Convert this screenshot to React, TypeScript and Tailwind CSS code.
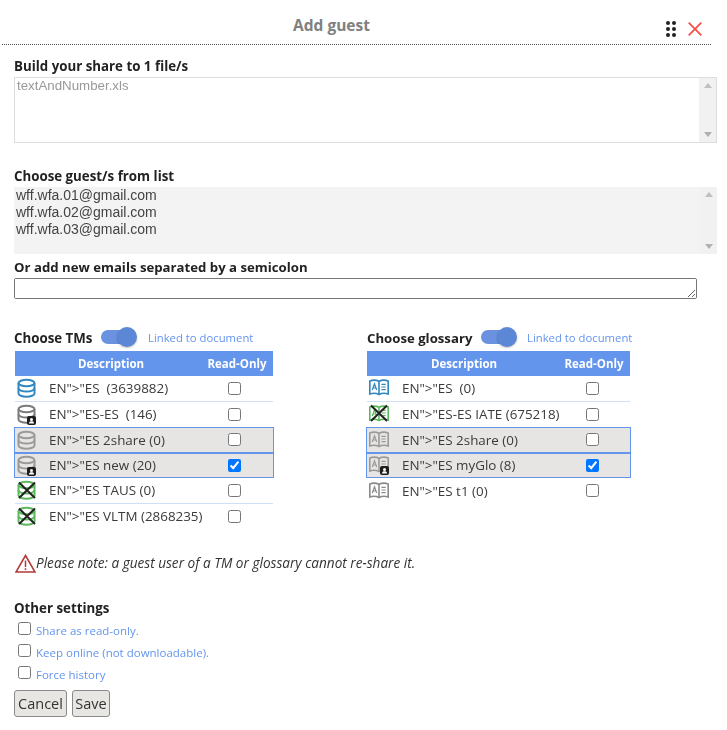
import React from "react";

const font = "font-['Open_Sans','Noto_Sans',sans-serif]";

function Badge({ x = 11, y = 12 }: { x?: number; y?: number }) {
  return (
    <g transform={`translate(${x} ${y})`}>
      <rect x="0" y="0" width="9" height="9" rx="2" fill="#1d1d1d" />
      <circle cx="4.500" cy="3.400" r="1.500" fill="#fff" />
      <path d="M2 7.500c0-1.600 1-2.200 2.500-2.200S7 5.900 7 7.500z" fill="#fff" />
    </g>
  );
}

function Cross() {
  return <path d="M3 2.500 19 18M19 2.500 3 18" stroke="#222" strokeWidth="2" fill="none" />;
}

function Db({ color, badge, cross }: { color: string; badge?: boolean; cross?: boolean }) {
  return (
    <svg width="22" height="22" viewBox="0 -1 22 22" className="block">
      <g fill="none" stroke={color} strokeWidth="2">
        <ellipse cx="10.500" cy="5" rx="8" ry="3.200" />
        <path d="M2.500 5v10.500c0 1.800 3.600 3.200 8 3.200s8-1.400 8-3.200V5" />
        <path d="M2.500 10.300c0 1.800 3.600 3.200 8 3.200s8-1.400 8-3.200" />
      </g>
      {cross && <Cross />}
      {badge && <Badge />}
    </svg>
  );
}

function Book({ color, badge, cross }: { color: string; badge?: boolean; cross?: boolean }) {
  return (
    <svg width="22" height="22" viewBox="0 0 22 22" className="block">
      <g fill="none" stroke={color} strokeWidth="1.600">
        <path d="M1.800 4c3-1.200 6.200-1.200 9.200.3 3-1.500 6.200-1.500 9.200-.3v13c-3-1-6.200-1-9.200.5-3-1.500-6.200-1.500-9.200-.5z" />
        <path d="M11 4.300v13" />
        <path d="M4.300 13l2.200-6.300L8.700 13M5 11h3M13.400 7.400h4.300M13.400 10h4.300M13.400 12.600h4.300" strokeWidth="1.200" />
      </g>
      {cross && <Cross />}
      {badge && <Badge x={12} y={12} />}
    </svg>
  );
}

type Row = { icon: React.ReactNode; label: string; checked?: boolean; active?: boolean; line?: boolean };

function ListTable({ rows, cols, checkPad }: { rows: Row[]; cols: string; checkPad: string }) {
  return (
    <div>
      <div className={`${cols} h-[25px] items-center bg-[#6495ed] text-[11.500px] font-bold text-white`}>
        <span />
        <span className="pl-[29px]">Description</span>
        <span className="text-center">Read-Only</span>
      </div>
      {rows.map((r) => (
        <div
          key={r.label}
          className={`${cols} h-[25.500px] items-center text-[13.400px] text-[#3a3a3a] ${
            r.active
              ? "border border-[#6495ed] bg-[#e7e5e3] -mx-px"
              : r.line
              ? "border-b border-[#cfe0f5]"
              : ""
          }`}
        >
          <span className="pl-[1px]">{r.icon}</span>
          <span className="whitespace-pre">{r.label}</span>
          <span className={`flex justify-center ${checkPad}`}>
            <input type="checkbox" defaultChecked={r.checked} className="m-0 h-[13px] w-[13px]" />
          </span>
        </div>
      ))}
    </div>
  );
}

function Toggle() {
  return (
    <div className="relative h-[20px] w-[36px] shrink-0">
      <div className="absolute left-0 top-[3px] h-[14px] w-[30px] rounded-full bg-[#6a92e0]" />
      <div className="absolute right-0 top-0 h-[20px] w-[20px] rounded-full bg-[#5c86d6] shadow-[0_1px_2px_rgba(0,0,0,0.25)]" />
    </div>
  );
}

function Scroll() {
  return (
    <div className="flex w-[17px] shrink-0 flex-col items-center justify-between bg-[#f1f1f1] py-[5px]">
      <svg width="8" height="5" viewBox="0 0 8 5"><path d="M4 0 8 5H0z" fill="#c0c0c0" /></svg>
      <svg width="8" height="5" viewBox="0 0 8 5"><path d="M4 5 8 0H0z" fill="#b0b0b0" /></svg>
    </div>
  );
}

function Option({ label, mt }: { label: string; mt: string }) {
  return (
    <label className={`flex items-start pl-[4px] ${mt}`}>
      <input type="checkbox" className="m-0 h-[13px] w-[13px]" />
      <span className="ml-[5px] pt-[1px] text-[11.500px] leading-[16px] text-[#6495ed]">{label}</span>
    </label>
  );
}

export default function App() {
  const tmCols = "grid grid-cols-[34px_minmax(0,1fr)_72px]";
  const glCols = "grid grid-cols-[35px_minmax(0,1fr)_72px]";
  const tms: Row[] = [
    { icon: <Db color="#2f87c0" />, label: 'EN">"ES  (3639882)', line: true },
    { icon: <Db color="#7b7b7b" badge />, label: 'EN">"ES-ES  (146)' },
    { icon: <Db color="#9a9a9a" />, label: 'EN">"ES 2share (0)', active: true },
    { icon: <Db color="#9a9a9a" badge />, label: 'EN">"ES new (20)', checked: true, active: true },
    { icon: <Db color="#5cb85c" cross />, label: 'EN">"ES TAUS (0)', line: true },
    { icon: <Db color="#5cb85c" cross />, label: 'EN">"ES VLTM (2868235)' },
  ];
  const gls: Row[] = [
    { icon: <Book color="#2f87c0" />, label: 'EN">"ES  (0)', line: true },
    { icon: <Book color="#5cb85c" cross />, label: 'EN">"ES-ES IATE (675218)' },
    { icon: <Book color="#9a9a9a" />, label: 'EN">"ES 2share (0)', active: true },
    { icon: <Book color="#9a9a9a" badge />, label: 'EN">"ES myGlo (8)', checked: true, active: true },
    { icon: <Book color="#8a8a8a" />, label: 'EN">"ES t1 (0)' },
  ];

  return (
    <div className={`${font} h-[730px] w-[727px] overflow-hidden bg-white text-[#222]`}>
      <header className="relative ml-[2px] flex h-[45px] w-[709px] items-start justify-center border-b border-dotted border-[#555] pr-[50px] pt-[15px]">
        <h1 className="text-[15.500px] font-bold leading-[20px] text-[#808080]">Add guest</h1>
        <div className="absolute right-[9px] top-[21px] flex items-center gap-[12px]">
          <svg width="10" height="16" viewBox="0 0 10 16" className="block">
            {[2, 8, 14].map((y) => (
              <g key={y} fill="#222">
                <circle cx="2" cy={y} r="2" />
                <circle cx="8" cy={y} r="2" />
              </g>
            ))}
          </svg>
          <svg width="14" height="14" viewBox="0 0 14 14" className="block">
            <path d="M.7.7 13.300 13.300M13.300.7.7 13.300" stroke="#f4504a" strokeWidth="1.800" fill="none" />
          </svg>
        </div>
      </header>

      <main className="px-[14px]">
        <p className="mt-[13px] text-[13.300px] font-bold leading-[17px]">Build your share to 1 file/s</p>
        <div className="mt-[2px] flex h-[66px] w-[703px] border border-[#ddd]">
          <div className="flex-1 pl-[2px] font-['Liberation_Sans',sans-serif] text-[13.300px] leading-[15px] text-[#999]">textAndNumber.xls</div>
          <Scroll />
        </div>

        <p className="mt-[25px] text-[13.300px] font-bold leading-[17px]">Choose guest/s from list</p>
        <div className="mt-[2px] flex h-[67px] w-[703px] bg-[#f3f3f3]">
          <div className="flex-1 pl-[2px] font-['Liberation_Sans',sans-serif] text-[14px] leading-[17px] text-[#444]">
            <div>wff.wfa.01@gmail.com</div>
            <div>wff.wfa.02@gmail.com</div>
            <div>wff.wfa.03@gmail.com</div>
          </div>
          <Scroll />
        </div>

        <p className="mt-[5px] text-[13.200px] font-bold leading-[17px]">Or add new emails separated by a semicolon</p>
        <textarea className="mt-[2px] block h-[21px] w-[683px] rounded-[2px] border border-[#767676] bg-white" />

        <div className="mt-[28px] flex items-start">
          <section className="ml-[1px] w-[258px]">
            <div className="flex h-[24px] items-start">
              <span className="-ml-[1px] mt-[3px] w-[87px] shrink-0 whitespace-nowrap text-[13.300px] font-bold leading-[17px]">Choose TMs</span>
              <Toggle />
              <span className="ml-[11px] mt-[3px] whitespace-nowrap text-[11.300px] leading-[16px] text-[#6495ed]">Linked to document</span>
            </div>
            <ListTable rows={tms} cols={tmCols} checkPad="pr-[5px]" />
          </section>
          <section className="ml-[94px] w-[263px]">
            <div className="flex h-[24px] items-start">
              <span className="mt-[3px] w-[114px] shrink-0 whitespace-nowrap text-[13.200px] font-bold leading-[17px]">Choose glossary</span>
              <Toggle />
              <span className="ml-[10px] mt-[3px] whitespace-nowrap text-[11.300px] leading-[16px] text-[#6495ed]">Linked to document</span>
            </div>
            <ListTable rows={gls} cols={glCols} checkPad="pr-[3px]" />
          </section>
        </div>

        <div className="mt-[24px] flex h-[20px] items-center">
          <svg width="21" height="19" viewBox="0 0 21 19" className="ml-[1px] block shrink-0">
            <path d="M10.500 1.500 20 18H1z" fill="none" stroke="#b03a3a" strokeWidth="1.600" />
            <path d="M10.500 6.500v6.500M10.500 14.200v1.800" stroke="#b03a3a" strokeWidth="1.500" />
          </svg>
          <span className="text-[13.600px] italic text-[#333]">Please note: a guest user of a TM or glossary cannot re-share it.</span>
        </div>

        <p className="mt-[27px] text-[13.300px] font-bold leading-[17px]">Other settings</p>
        <Option label="Share as read-only." mt="mt-[5px]" />
        <Option label="Keep online (not downloadable)." mt="mt-[5px]" />
        <Option label="Force history" mt="mt-[5px]" />

        <div className="mt-[7px] flex gap-[5px]">
          <button className="h-[27px] w-[53px] rounded-[3px] border border-[#8a8a8a] bg-[#e8e6e3] text-[14.500px] text-[#333]">Cancel</button>
          <button className="h-[27px] w-[38px] rounded-[3px] border border-[#8a8a8a] bg-[#e8e6e3] text-[14.500px] text-[#333]">Save</button>
        </div>
      </main>
    </div>
  );
}
